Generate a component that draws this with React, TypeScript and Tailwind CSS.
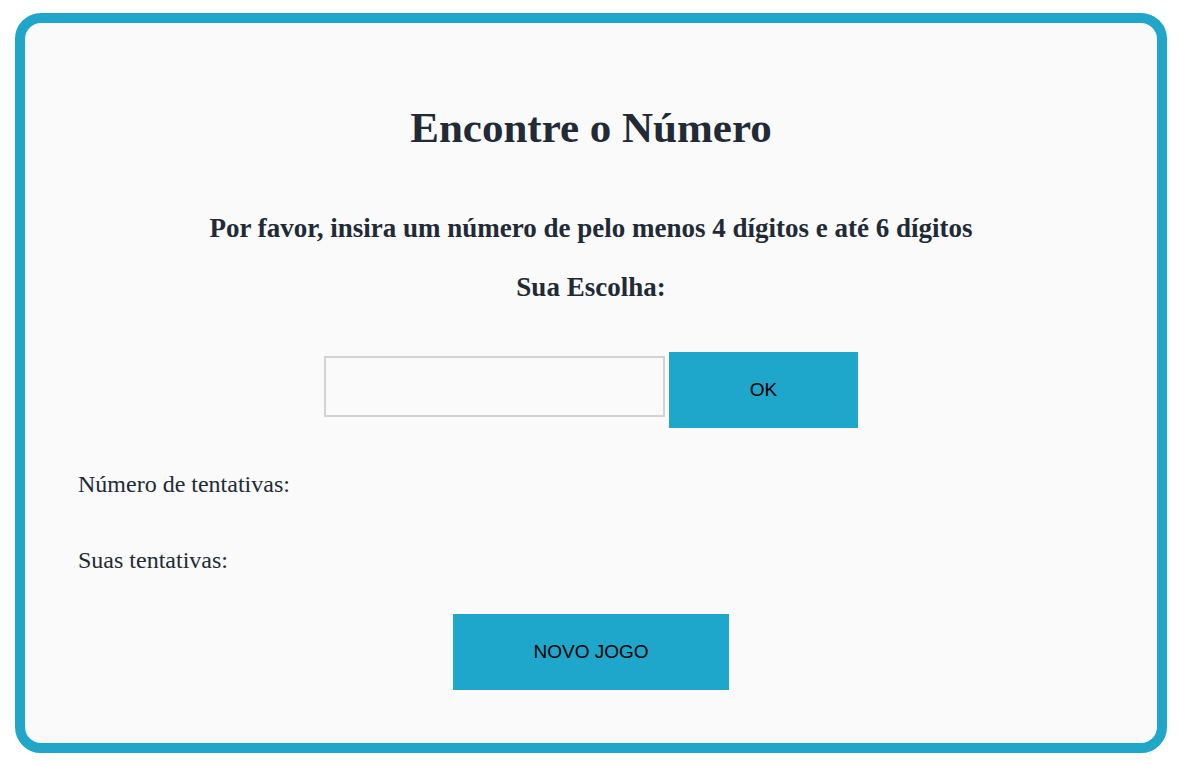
export default function App() {
  return (
    <div className="min-h-screen bg-white pt-[13px] px-[15px] pb-[11px] w-[1184px]">
      <div
        className="h-[740px] w-[1152px] rounded-[26px] border-[10px] border-[#1fa6c9] bg-[#fafafa] flex flex-col text-[#212a36]"
        style={{ fontFamily: '"Liberation Serif", "Times New Roman", serif' }}
      >
        <h1 className="mt-[80px] text-center text-[43px] font-bold leading-[50px]">Encontre o Número</h1>
        <h3 className="mt-[61px] text-center text-[27px] font-bold leading-[28px]">
          Por favor, insira um número de pelo menos 4 dígitos e até 6 dígitos
        </h3>
        <h3 className="mt-[31px] text-center text-[27px] font-bold leading-[28px]">Sua Escolha:</h3>

        <div className="mt-[51px] flex justify-center items-start gap-[4px]">
          <input
            type="text"
            className="mt-[4px] h-[61px] w-[341px] border-2 border-[#d3d3d3] bg-[#fafafa] outline-none"
          />
          <button
            className="h-[76px] w-[189px] bg-[#1ea7ca] text-[19px] text-black"
            style={{ fontFamily: '"Liberation Sans", Arial, sans-serif' }}
          >
            OK
          </button>
        </div>

        <p className="mt-[43px] ml-[53px] text-[24px] leading-[26px]">Número de tentativas:</p>
        <p className="mt-[50px] ml-[53px] text-[24px] leading-[26px]">Suas tentativas:</p>

        <div className="mt-[41px] flex justify-center">
          <button
            className="h-[76px] w-[276px] bg-[#1ea7ca] text-[19px] text-black"
            style={{ fontFamily: '"Liberation Sans", Arial, sans-serif' }}
          >
            NOVO JOGO
          </button>
        </div>
      </div>
    </div>
  );
}
